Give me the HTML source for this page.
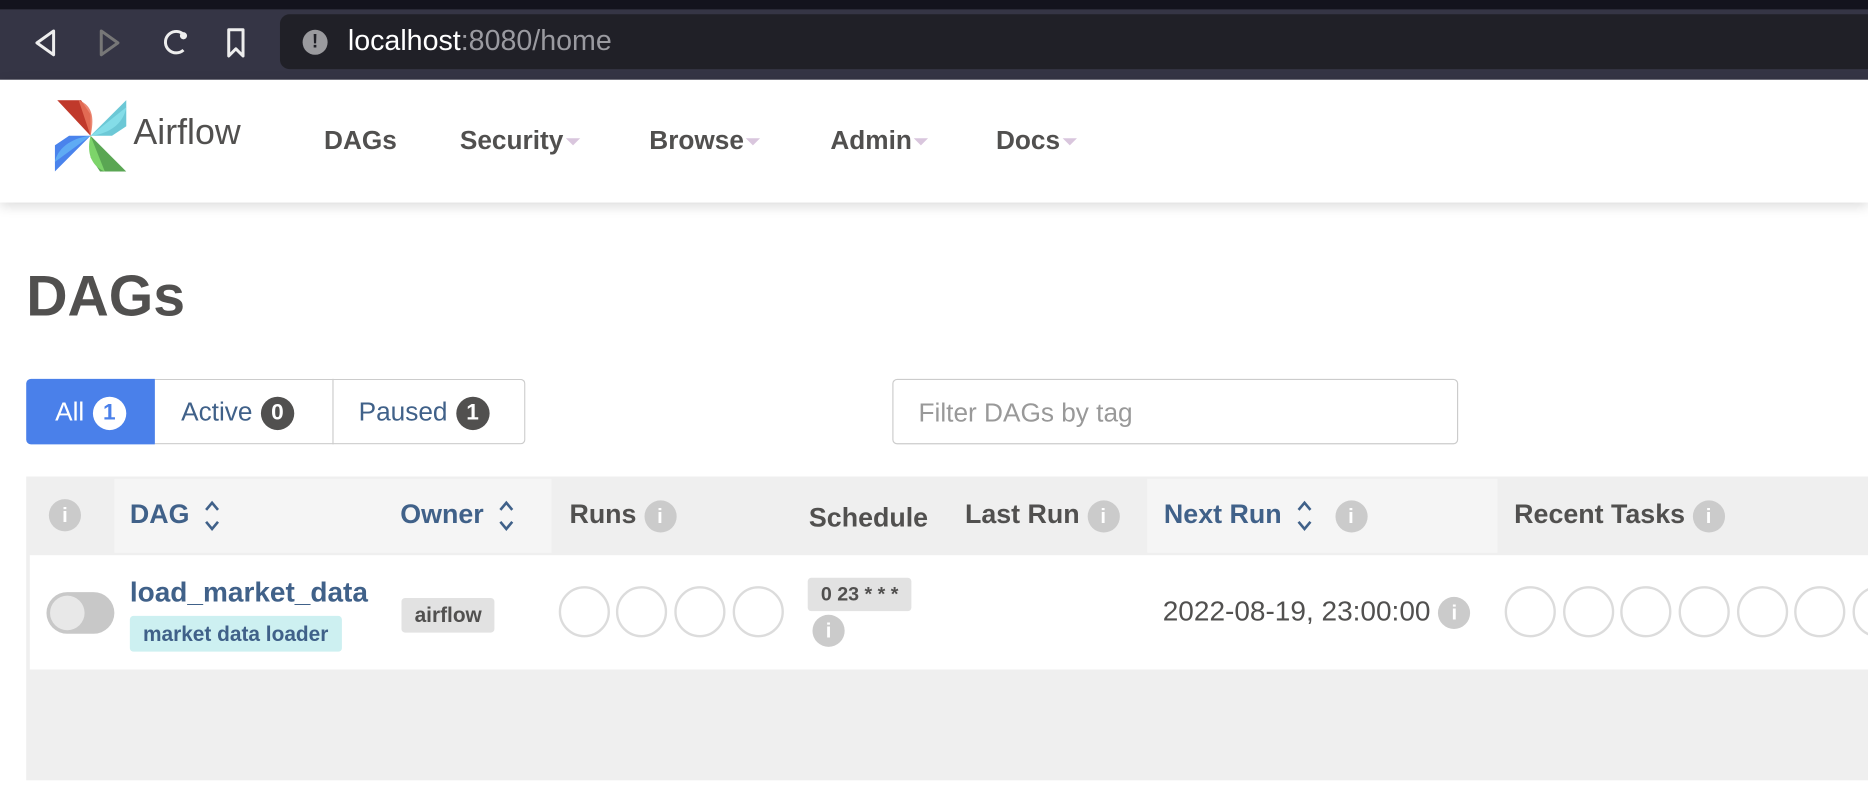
<!DOCTYPE html>
<html><head><meta charset="utf-8"><style>
html,body{margin:0;padding:0;width:1868px;height:794px;overflow:hidden;background:#fff;font-family:"Liberation Sans",Arial,sans-serif}
#w{position:absolute;left:0;top:0;width:1568px;height:667px;transform:scale(1.19133);transform-origin:0 0}
.a{position:absolute}
.nav{font-weight:bold;font-size:22px;color:#51504f;top:105px}
.car{display:inline-block;width:0;height:0;border-left:6px solid transparent;border-right:6px solid transparent;border-top:6px solid #d9c6dd;vertical-align:middle;margin-left:2px}
.th{font-weight:bold;font-size:22.5px;top:419px;white-space:nowrap}
.ic{display:inline-block;width:27px;height:27px;border-radius:50%;background:#cbcbcb;color:#fff;font-weight:bold;font-size:17px;text-align:center;line-height:27px;vertical-align:middle}
.c{position:absolute;width:43px;height:43px;border:2px solid #dcdcdc;border-radius:50%;box-sizing:border-box;top:492px}
.bd{display:inline-block;min-width:20px;padding:0 4px;height:28px;border-radius:14px;text-align:center;line-height:28px;font-size:19px;font-weight:bold;vertical-align:middle;margin-left:7px}
.sort{display:inline-block;vertical-align:middle;margin-left:12px}
</style></head><body><div id="w">
<div class="a" style="left:0;top:0;width:1568px;height:8px;background:#13131d"></div>
<div class="a" style="left:0;top:8px;width:1568px;height:59px;background:#353545"></div>
<div class="a" style="left:235px;top:12px;width:1340px;height:46px;background:#202027;border-radius:8px"></div>
<svg class="a" style="left:20px;top:20px" width="200" height="32" viewBox="0 0 200 32">
<path d="M25 6 L11 16 L25 26 Z" fill="none" stroke="#eee" stroke-width="2.5" stroke-linejoin="round"/>
<path d="M65 6 L79 16 L65 26 Z" fill="none" stroke="#777" stroke-width="2.5" stroke-linejoin="round"/>
<path d="M133 8 A9 9 0 1 0 134 22" fill="none" stroke="#eee" stroke-width="2.5"/><circle cx="134" cy="10" r="3" fill="#eee"/>
<path d="M172 5 H184 V27 L178 21 L172 27 Z" fill="none" stroke="#eee" stroke-width="2.5" stroke-linejoin="round"/>
</svg>
<div class="a" style="left:254px;top:25px;width:21px;height:21px;border-radius:50%;background:#9a9a9e;color:#202027;font-weight:bold;font-size:16px;text-align:center;line-height:21px">!</div>
<div class="a" style="left:292px;top:21px;font-size:24px;color:#fff">localhost<span style="color:#9a9aa0">:8080/home</span></div>
<div class="a" style="left:0;top:67px;width:1568px;height:103px;background:#fff;box-shadow:0 3px 10px rgba(0,0,0,.15)"></div>
<svg class="a" style="left:46px;top:84px" width="62" height="60" viewBox="0 0 62 60">
<path d="M30 30 L2 0 L22 0 L30 12 Z" fill="#c0392b"/>
<path d="M30 30 L20 0 C30 4 34 12 30 30Z" fill="#e7735a" opacity=".85"/>
<path d="M30 30 L60 0 L60 22 L48 30 Z" fill="#6cc8d6"/>
<path d="M30 30 L60 6 C58 18 48 28 30 30Z" fill="#84dde8"/>
<path d="M30 30 L60 60 L38 60 L30 48 Z" fill="#5aa653"/>
<path d="M30 30 L42 60 C32 56 26 46 30 30Z" fill="#7dd46a"/>
<path d="M30 30 L0 60 L0 38 L12 30 Z" fill="#4a83ec"/>
<path d="M30 30 L0 52 C2 42 12 32 30 30Z" fill="#64b5f6" opacity=".8"/>
</svg>
<div class="a" style="left:112px;top:95px;font-size:30px;color:#51504f">Airflow</div>
<div class="a nav" style="left:272px">DAGs</div>
<div class="a nav" style="left:386px">Security<span class="car"></span></div>
<div class="a nav" style="left:545px">Browse<span class="car"></span></div>
<div class="a nav" style="left:697px">Admin<span class="car"></span></div>
<div class="a nav" style="left:836px">Docs<span class="car"></span></div>
<div class="a" style="left:22px;top:222px;font-size:48px;font-weight:bold;color:#51504f">DAGs</div>
<div class="a" style="left:22px;top:318px;width:108px;height:55px;background:#4a80ea;border-radius:4px 0 0 4px;color:#fff;font-size:22px;line-height:55px;text-align:center">All<span class="bd" style="background:#fff;color:#4a80ea">1</span></div>
<div class="a" style="left:130px;top:318px;width:310px;height:53px;border:1px solid #ccc;border-left:none;border-radius:0 4px 4px 0"></div>
<div class="a" style="left:279px;top:318px;width:1px;height:55px;background:#ccc"></div>
<div class="a" style="left:152px;top:318px;line-height:55px;font-size:22px;color:#406189">Active<span class="bd" style="background:#51504f;color:#fff">0</span></div>
<div class="a" style="left:301px;top:318px;line-height:55px;font-size:22px;color:#406189">Paused<span class="bd" style="background:#51504f;color:#fff">1</span></div>
<div class="a" style="left:749px;top:318px;width:473px;height:53px;border:1px solid #ccc;border-radius:4px;font-size:22px;color:#999;line-height:55px;box-sizing:content-box"><span style="margin-left:21px">Filter DAGs by tag</span></div>
<div class="a" style="left:22px;top:400px;width:1546px;height:255px;background:#efefef"></div>
<div class="a" style="left:96px;top:402px;width:367px;height:62px;background:#f5f5f5"></div>
<div class="a" style="left:963px;top:402px;width:294px;height:62px;background:#f5f5f5"></div>
<div class="a" style="left:25px;top:466px;width:1543px;height:96px;background:#fff"></div>
<div class="a th" style="left:41px;top:418px"><span class="ic">i</span></div>
<div class="a th" style="left:109px;color:#406189">DAG<svg class="sort" width="14" height="28" viewBox="0 0 14 28"><path d="M2 9 L7 3 L12 9 M2 19 L7 25 L12 19" fill="none" stroke="#406189" stroke-width="2.2"/></svg></div>
<div class="a th" style="left:336px;color:#406189">Owner<svg class="sort" width="14" height="28" viewBox="0 0 14 28"><path d="M2 9 L7 3 L12 9 M2 19 L7 25 L12 19" fill="none" stroke="#406189" stroke-width="2.2"/></svg></div>
<div class="a th" style="left:478px;color:#51504f">Runs <span class="ic">i</span></div>
<div class="a th" style="left:679px;top:422px;color:#51504f">Schedule</div>
<div class="a th" style="left:810px;color:#51504f">Last Run <span class="ic">i</span></div>
<div class="a th" style="left:977px;color:#406189">Next Run<svg class="sort" width="14" height="28" viewBox="0 0 14 28"><path d="M2 9 L7 3 L12 9 M2 19 L7 25 L12 19" fill="none" stroke="#406189" stroke-width="2.2"/></svg> &nbsp;&nbsp;<span class="ic">i</span></div>
<div class="a th" style="left:1271px;color:#51504f">Recent Tasks <span class="ic">i</span></div>
<div class="a" style="left:39px;top:497px;width:57px;height:35px;border-radius:18px;background:#c8c8c8"></div>
<div class="a" style="left:42px;top:500px;width:29px;height:29px;border-radius:50%;background:#e8e8e8"></div>
<div class="a" style="left:109px;top:484px;font-size:23.5px;font-weight:bold;color:#406189">load_market_data</div>
<div class="a" style="left:109px;top:517px;padding:0 11px;height:30px;line-height:31px;background:#cdf0f1;color:#406189;font-weight:bold;font-size:17.5px;border-radius:3px">market data loader</div>
<div class="a" style="left:337px;top:502px;padding:0 11px;height:29px;line-height:29px;background:#e2e2e2;color:#51504f;font-weight:bold;font-size:17.5px;border-radius:3px">airflow</div>
<div class="c" style="left:469px"></div><div class="c" style="left:517px"></div><div class="c" style="left:566px"></div><div class="c" style="left:615px"></div>
<div class="a" style="left:678px;top:485px;padding:0 11px;height:28px;line-height:28px;background:#e2e2e2;color:#51504f;font-weight:bold;font-size:16.5px;border-radius:3px">0 23 * * *</div>
<div class="a" style="left:682px;top:516px"><span class="ic">i</span></div>
<div class="a" style="left:976px;top:500px;font-size:23.5px;color:#51504f">2022-08-19, 23:00:00 <span class="ic">i</span></div>
<div class="c" style="left:1263px"></div><div class="c" style="left:1312px"></div><div class="c" style="left:1360px"></div><div class="c" style="left:1409px"></div><div class="c" style="left:1458px"></div><div class="c" style="left:1506px"></div><div class="c" style="left:1555px"></div>
</div></body></html>
